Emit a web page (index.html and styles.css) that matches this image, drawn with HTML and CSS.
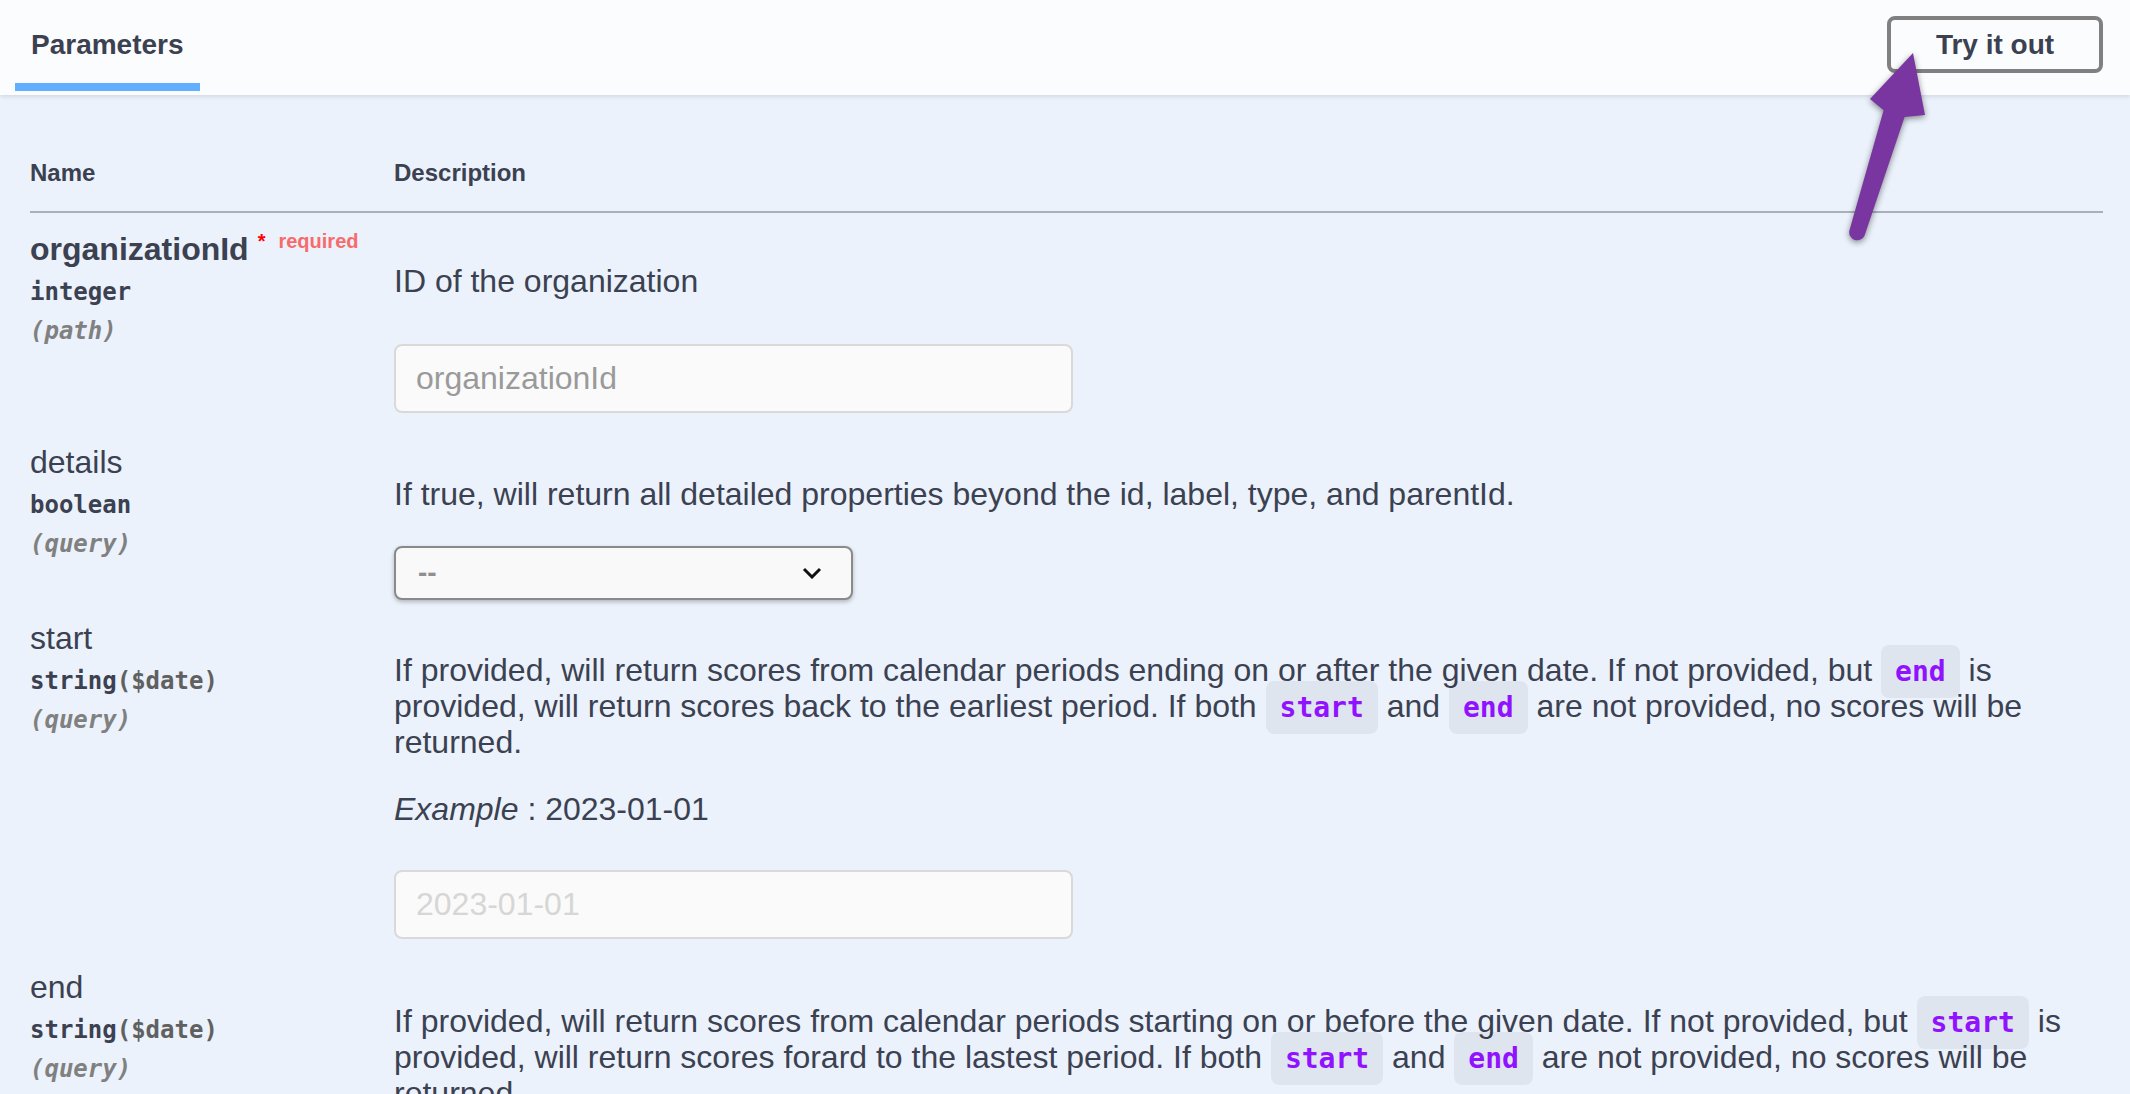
FILE: index.html
```html
<!DOCTYPE html>
<html lang="en">
<head>
    <meta charset="UTF-8">
    <meta name="viewport" content="width=device-width, initial-scale=1.0">
    <title>Parameters</title>
    <link rel="stylesheet" href="styles.css">
</head>
<body>
    <div class="section-header">
        <div class="tab-item">
            <h4>Parameters</h4>
            <div class="tab-underline"></div>
        </div>
        <button class="try-out">Try it out</button>
    </div>

    <!-- callout arrow pointing at the button -->
    <svg class="callout-arrow" width="100" height="215" viewBox="0 0 100 215">
        <path d="M 9.4 190.6 L 43.6 70.3 L 30 59 L 73 13 L 85 75 L 64.6 76.9 L 24.6 195.4 A 8 8 0 0 1 9.4 190.6 Z" fill="#7a36a0"/>
    </svg>

    <div class="table-container">
        <table class="parameters">
            <colgroup>
                <col class="col-name">
                <col>
            </colgroup>
            <thead>
                <tr>
                    <th>Name</th>
                    <th>Description</th>
                </tr>
            </thead>
            <tbody>
                <tr>
                    <td class="param-name">
                        <div class="name required">organizationId<span class="star">*</span><span class="req">required</span></div>
                        <div class="type">integer</div>
                        <div class="in">(path)</div>
                    </td>
                    <td class="param-desc">
                        <p>ID of the organization</p>
                        <input class="param-input" type="text" placeholder="organizationId">
                    </td>
                </tr>
                <tr>
                    <td class="param-name">
                        <div class="name">details</div>
                        <div class="type">boolean</div>
                        <div class="in">(query)</div>
                    </td>
                    <td class="param-desc">
                        <p>If true, will return all detailed properties beyond the id, label, type, and parentId.</p>
                        <div class="select-box">
                            <span class="select-value">--</span>
                            <svg width="20" height="12" viewBox="0 0 20 12">
                                <polyline points="2,2 10,10 18,2" fill="none" stroke="#111" stroke-width="3"/>
                            </svg>
                        </div>
                    </td>
                </tr>
                <tr>
                    <td class="param-name">
                        <div class="name">start</div>
                        <div class="type">string<span class="format">($date)</span></div>
                        <div class="in">(query)</div>
                    </td>
                    <td class="param-desc">
                        <p>If provided, will return scores from calendar periods ending on or after the given date. If not provided, but <code>end</code> is provided, will return scores back to the earliest period. If both <code>start</code> and <code>end</code> are not provided, no scores will be returned.</p>
                        <p class="example"><i>Example</i> : 2023-01-01</p>
                        <input class="param-input dim" type="text" placeholder="2023-01-01">
                    </td>
                </tr>
                <tr>
                    <td class="param-name">
                        <div class="name">end</div>
                        <div class="type">string<span class="format">($date)</span></div>
                        <div class="in">(query)</div>
                    </td>
                    <td class="param-desc">
                        <p class="late">If provided, will return scores from calendar periods starting on or before the given date. If not provided, but <code>start</code> is provided, will return scores forard to the lastest period. If both <code>start</code> and <code>end</code> are not provided, no scores will be returned.</p>
                    </td>
                </tr>
            </tbody>
        </table>
    </div>
</body>
</html>
```

FILE: styles.css
```css
body {
    margin: 0;
    padding: 0;
    background-color: #ebf2fb;
    font-family: "Liberation Sans", Arial, sans-serif;
    color: #3b4151;
}
.section-header {
    display: flex;
    justify-content: space-between;
    align-items: flex-start;
    height: 95px;
    padding: 0 27px 0 15px;
    background-color: #fbfcfe;
    box-shadow: 0 2px 4px rgba(0, 0, 0, 0.1);
}
.tab-item {
    padding: 0 16px;
}
.tab-item h4 {
    margin: 0;
    padding-top: 29px;
    font-size: 28px;
    line-height: 32px;
    font-weight: bold;
}
.tab-underline {
    margin: 22px -16px 0;
    height: 8px;
    background-color: #61affe;
}
.try-out {
    margin-top: 16px;
    width: 216px;
    height: 57px;
    border: 4px solid #808080;
    border-radius: 8px;
    background: transparent;
    font-family: "Liberation Sans", Arial, sans-serif;
    font-size: 28px;
    font-weight: bold;
    color: #3b4151;
    cursor: pointer;
}
.callout-arrow {
    position: absolute;
    left: 1840px;
    top: 40px;
    filter: drop-shadow(0 2px 3px rgba(0, 0, 0, 0.45));
}
.table-container {
    padding: 0 27px 0 30px;
}
.parameters {
    width: 100%;
    table-layout: fixed;
    border-collapse: separate;
    border-spacing: 0;
}
.col-name {
    width: 364px;
}
.parameters th {
    text-align: left;
    font-size: 24px;
    line-height: 28px;
    font-weight: bold;
    padding: 64px 0 24px;
    border-bottom: 2px solid #aab0bb;
}
.parameters td {
    vertical-align: top;
    padding: 16px 0 0;
}
.name {
    font-size: 32px;
    line-height: 40px;
}
.name.required {
    font-weight: bold;
}
.star,
.req {
    position: relative;
    top: -12px;
    font-size: 20px;
    line-height: 20px;
}
.star {
    margin-left: 9px;
    color: #ff0000;
}
.req {
    margin-left: 13px;
    color: #f76b6b;
}
.type,
.in {
    font-family: "DejaVu Sans Mono", monospace;
    font-size: 24px;
    font-weight: bold;
    line-height: 36px;
}
.type {
    margin-top: 5px;
}
.format {
    color: #606060;
}
.in {
    margin-top: 3px;
    font-style: italic;
    color: #808080;
}
.param-desc p {
    margin: 34px 0 0;
    font-size: 32px;
    line-height: 36px;
}
.param-desc p + p {
    margin-top: 31px;
}
.param-desc p.late {
    margin-top: 36px;
}
.param-desc code {
    font-family: "DejaVu Sans Mono", monospace;
    font-size: 28px;
    line-height: 28px;
    font-weight: bold;
    color: #9012fe;
    background-color: rgba(0, 0, 0, 0.05);
    padding: 10px 14px;
    border-radius: 8px;
}
.param-input {
    display: block;
    box-sizing: border-box;
    width: 679px;
    height: 69px;
    margin: 45px 0 13px;
    padding: 0 20px;
    border: 2px solid #d9d9d9;
    border-radius: 8px;
    background-color: #fafafa;
    font-family: "Liberation Sans", Arial, sans-serif;
    font-size: 32px;
    color: #3b4151;
}
.example + .param-input {
    margin: 43px 0 12px;
}
.param-input::placeholder {
    color: #9a9a9a;
}
.param-input.dim::placeholder {
    color: #d6d6d6;
}
.select-box {
    display: flex;
    justify-content: space-between;
    align-items: center;
    box-sizing: border-box;
    width: 459px;
    height: 54px;
    margin: 34px 0 2px;
    padding: 0 29px 0 22px;
    border: 2px solid #8a8a8a;
    border-radius: 8px;
    background-color: #f9f9f9;
    box-shadow: 0 2px 4px rgba(0, 0, 0, 0.25);
}
.select-value {
    font-size: 28px;
    font-weight: bold;
    color: #8f8f8f;
}
```
